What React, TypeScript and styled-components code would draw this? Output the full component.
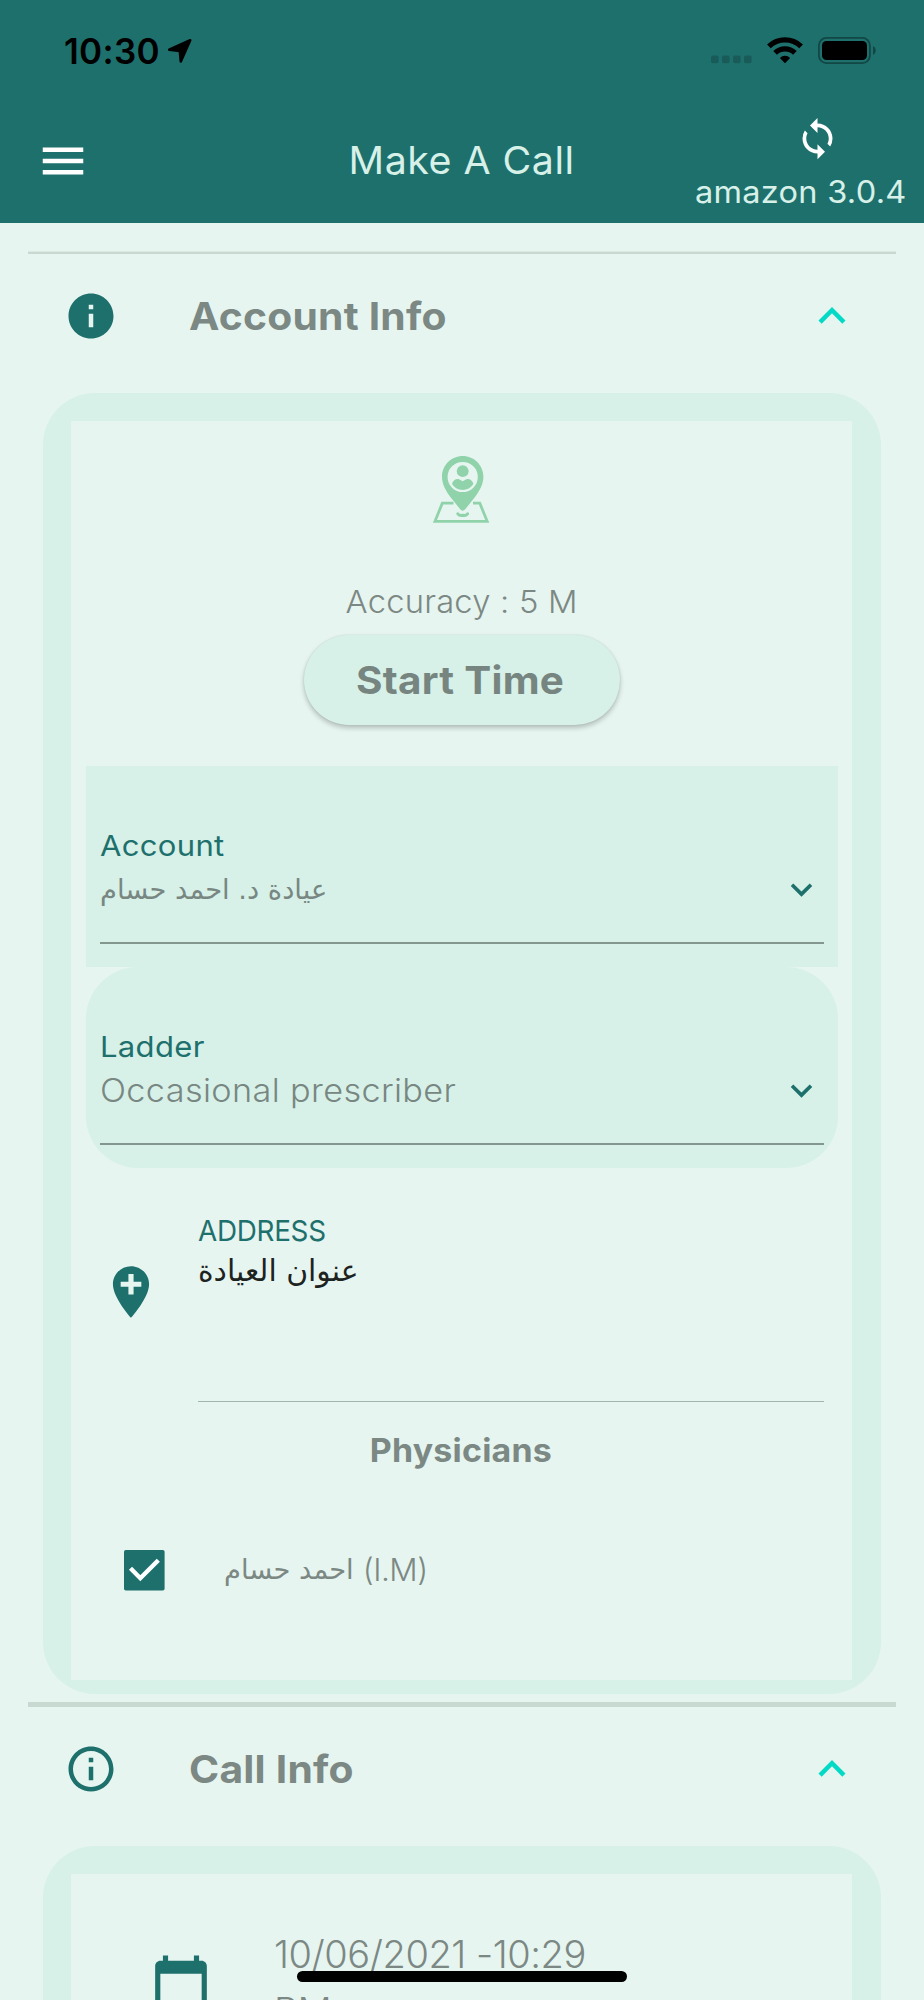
import React from "react";
import styled, { createGlobalStyle, css } from "styled-components";
import {
  MdAddLocation,
  MdCalendarToday,
  MdExpandLess,
  MdExpandMore,
  MdInfo,
  MdInfoOutline,
  MdMenu,
  MdSync,
} from "react-icons/md";

const teal = "#1e706d";
const mint = "#d7f1e8";
const page = "#e6f5f0";
const grey = "#7c8883";
const accent = "#03dac5";
const latin = `Inter, "Open Sans", sans-serif`;
const arabic = `"DejaVu Sans", "Noto Sans", sans-serif`;

const wide = (ratio: number, origin: "left" | "center" | "right") => css`
  transform: scaleX(${ratio});
  transform-origin: ${origin} center;
`;

const GlobalStyle = createGlobalStyle`
  *, *::before, *::after { box-sizing: border-box; }
  body { margin: 0; background: ${page}; font-family: ${latin}; }
  svg { display: block; flex: none; }
`;

const Screen = styled.div`
  position: relative;
  width: 924px;
  height: 2000px;
  overflow: hidden;
  background: ${page};
  color: ${grey};
`;

const Header = styled.header`
  height: 223px;
  background: ${teal};
  color: ${mint};
`;

const StatusBar = styled.div`
  display: flex;
  align-items: center;
  height: 101px;
  padding: 0 47px 0 64px;
  color: #000;
`;

const Clock = styled.span`
  width: 103px;
  font-size: 35px;
  font-weight: 600;
  letter-spacing: 0.3px;
  line-height: 40px;
  white-space: nowrap;
`;

const StatusIcons = styled.div`
  display: flex;
  gap: 15px;
  margin-left: auto;
`;

const Toolbar = styled.div`
  display: grid;
  grid-template-columns: 250px 1fr 250px;
  height: 122px;
`;

const MenuButton = styled.div`
  padding: 33px 0 0 36px;
  color: #fff;
`;

const ScreenTitle = styled.h1`
  justify-self: center;
  margin: 39px 0 0;
  font-size: 37.5px;
  font-weight: 400;
  line-height: 41px;
  letter-spacing: 0.45px;
  white-space: nowrap;
  ${wide(1.05, "center")}
`;

const SyncBlock = styled.div`
  display: flex;
  flex-direction: column;
  align-items: flex-end;
  padding: 15px 17px 0 0;
`;

const SyncIcon = styled.div`
  margin-right: 67px;
  color: #fff;
`;

const Version = styled.span`
  margin-top: 13px;
  font-size: 31px;
  line-height: 36px;
  letter-spacing: 0.25px;
  white-space: nowrap;
  ${wide(1.05, "right")}
`;

const Divider = styled.hr<{ $thick?: boolean }>`
  height: ${(p) => (p.$thick ? 5 : 3)}px;
  margin: ${(p) => (p.$thick ? "8px 28px 0" : "28px 28px 0")};
  border: 0;
  border-top: ${(p) => (p.$thick ? 0 : 1)}px solid #dae9e2;
  background: #c8d9d2;
`;

const SectionHeader = styled.div`
  display: flex;
  align-items: center;
  height: 139px;
  padding: 0 65px 15px 64px;
`;

const SectionTitle = styled.h2`
  flex: 1;
  margin: 0 0 0 71px;
  font-size: 38.5px;
  font-weight: 700;
  line-height: 46px;
  letter-spacing: 0.2px;

  span {
    display: inline-block;
    ${wide(1.06, "left")}
  }
`;

const Card = styled.section`
  margin: 0 43px;
  padding: 28px 29px 14px 28px;
  border-radius: 52px;
  background: ${mint};
`;

const CardBody = styled.div<{ $height: number }>`
  display: flex;
  flex-direction: column;
  height: ${(p) => p.$height}px;
  padding: 0 14px 0 15px;
  background: ${page};
`;

const MapMark = styled.div`
  display: flex;
  justify-content: center;
  padding-top: 35px;
`;

const Accuracy = styled.p`
  align-self: center;
  margin: 58px 0 0;
  font-size: 31.5px;
  font-weight: 300;
  line-height: 41px;
  letter-spacing: 0.2px;
  ${wide(1.04, "center")}
`;

const StartButton = styled.button`
  align-self: center;
  width: 316px;
  height: 90px;
  margin: 13px 0 41px;
  padding: 0 3px 0 0;
  border: 0;
  border-radius: 45px;
  background: ${mint};
  box-shadow: 0 3px 5px rgba(0, 0, 0, 0.22), 0 0 2px rgba(0, 0, 0, 0.1);
  color: #76857f;
  font-family: inherit;
  font-size: 38.5px;
  font-weight: 700;
  letter-spacing: 0.25px;

  span {
    display: inline-block;
    ${wide(1.05, "center")}
  }
`;

const Field = styled.div<{ $round?: boolean }>`
  flex: none;
  height: 201px;
  padding: 60px 14px 0;
  border-radius: ${(p) => (p.$round ? 52 : 0)}px;
  background: ${mint};
`;

const Label = styled.div<{ $narrow?: boolean }>`
  align-self: flex-start;
  width: max-content;
  color: ${teal};
  font-size: 29px;
  line-height: 40px;
  letter-spacing: ${(p) => (p.$narrow ? -0.3 : 0.3)}px;
  ${(p) => wide(p.$narrow ? 0.96 : 1.07, "left")}
`;

const ValueRow = styled.div`
  display: flex;
  align-items: center;
  justify-content: space-between;
  height: 78px;
  padding: 1px 1px 30px 0;
  border-bottom: 2px solid #84978f;
  color: ${teal};
`;

const Value = styled.span`
  color: #788782;
  font-size: 32px;
  font-weight: 300;
  line-height: 44px;
  letter-spacing: 0.35px;
  ${wide(1.07, "left")}
`;

const ArabicText = styled.span<{ $size?: number; $ink?: string }>`
  color: ${(p) => p.$ink ?? grey};
  font-family: ${arabic};
  font-size: ${(p) => p.$size ?? 27}px;
  line-height: 40px;
  white-space: nowrap;
`;

const AddressRow = styled.div`
  display: flex;
  flex: none;
  height: 234px;
  padding-right: 14px;
  color: ${teal};
`;

const PinSlot = styled.div`
  width: 112px;
  padding: 93px 0 0 14px;
`;

const AddressField = styled.div`
  display: flex;
  flex: 1;
  flex-direction: column;
  padding-top: 43px;
  border-bottom: 1px solid #a3b6ae;
`;

const GroupTitle = styled.h3`
  align-self: center;
  margin: 29px 0 69px;
  padding-right: 2px;
  font-size: 32px;
  font-weight: 700;
  line-height: 40px;
  letter-spacing: 0.2px;
  ${wide(1.06, "center")}
`;

const PhysicianRow = styled.div`
  display: flex;
  align-items: center;
  height: 60px;
  padding-left: 38px;
`;

const PhysicianName = styled.div`
  display: flex;
  align-items: center;
  gap: 9px;
  margin-left: 59px;
`;

const Specialty = styled.span`
  font-size: 31.5px;
  font-weight: 300;
  line-height: 40px;
  letter-spacing: -0.5px;
`;

const DateRow = styled.div`
  display: flex;
  padding: 52px 0 0 64px;
`;

const CalendarSlot = styled.div`
  padding-top: 27px;
  color: ${teal};
`;

const DateText = styled.div`
  width: 330px;
  margin-left: 62px;
  font-size: 38px;
  font-weight: 300;
  line-height: 57px;
  letter-spacing: -0.45px;
`;

const HomeIndicator = styled.div`
  position: absolute;
  top: 1971px;
  left: 297px;
  width: 330px;
  height: 11px;
  border-radius: 6px;
  background: #000;
`;

const LocationArrow = () => (
  <svg width="26" height="26" viewBox="0 0 26 26">
    <path d="M23.2 2.2 2.2 11.800 12.800 12.900 13.800 23.400Z" fill="#000" stroke="#000" strokeWidth="2.600" strokeLinejoin="round" />
  </svg>
);

const CellularDots = () => (
  <svg width="41" height="27" viewBox="0 0 41 27">
    {[0, 11, 22, 33].map((x) => (
      <rect key={x} x={x} y="18.6" width="7.6" height="7.6" rx="2" fill="#185b58" />
    ))}
  </svg>
);

const Wifi = () => (
  <svg width="36" height="27" viewBox="0 0 36 27">
    <path d="M1.9 9.3A23.3 23.3 0 0 1 34.1 9.3" fill="none" stroke="#000" strokeWidth="5.3" />
    <path d="M8.1 15.9A14.3 14.3 0 0 1 27.9 15.9" fill="none" stroke="#000" strokeWidth="5.3" />
    <path d="M12.9 20.9A7.3 7.3 0 0 1 23.1 20.9L18 26.2Z" fill="#000" />
  </svg>
);

const Battery = () => (
  <svg width="59" height="27" viewBox="0 0 59 27">
    <rect x="0.9" y="0.9" width="51" height="25.2" rx="7.6" fill="none" stroke="#124745" strokeWidth="1.8" />
    <rect x="4" y="4" width="45" height="19" rx="4.6" fill="#000" />
    <path d="M55 9a5 5 0 0 1 0 9Z" fill="#124745" />
  </svg>
);

const MapPerson = () => (
  <svg width="58" height="67" viewBox="0 0 58 67">
    <path d="M20.500 47.200H9.300L2 65.300H54.200L46.800 47.200H40" fill="none" stroke="#90d3ab" strokeWidth="2.800" />
    <path
      fill="#90d3ab"
      fillRule="evenodd"
      d="M29.700 0C18.200 0 9 9.300 9 20.700 9 28 12.800 34.500 17 40.500L27.200 53.300Q29.700 56 32.200 53.300L42.400 40.500C46.600 34.500 50.400 28 50.400 20.700 50.400 9.300 41.200 0 29.700 0ZM29.700 5.900a15.100 15.100 0 1 1 0 30.200a15.100 15.100 0 1 1 0-30.200Z"
    />
    <circle cx="29.700" cy="15.200" r="5.900" fill="#90d3ab" />
    <path d="M19 27.800C20.200 24 23.200 22.300 26 23.200L29.700 25.300 33.400 23.200C36.200 22.300 39.200 24 40.400 27.800 38 32 34 34 29.700 34S21.400 32 19 27.800Z" fill="#90d3ab" />
    <path d="M24.800 57.800Q26.500 60 29.700 59.300 32.900 60 34.600 57.800" fill="none" stroke="#90d3ab" strokeWidth="3" strokeLinecap="round" />
  </svg>
);

const CheckedBox = () => (
  <svg width="41" height="41" viewBox="0 0 41 41">
    <rect width="40.600" height="40.600" rx="1.800" fill={teal} />
    <path d="M6.500 18.300 16.300 28.200 34.300 10.200" fill="none" stroke="#fff" strokeWidth="4.400" />
  </svg>
);

export default function App() {
  return (
    <Screen>
      <GlobalStyle />
      <Header>
        <StatusBar>
          <Clock>10:30</Clock>
          <LocationArrow />
          <StatusIcons>
            <CellularDots />
            <Wifi />
            <Battery />
          </StatusIcons>
        </StatusBar>
        <Toolbar>
          <MenuButton>
            <MdMenu size={54} />
          </MenuButton>
          <ScreenTitle>Make A Call</ScreenTitle>
          <SyncBlock>
            <SyncIcon>
              <MdSync size={45} />
            </SyncIcon>
            <Version>amazon 3.0.4</Version>
          </SyncBlock>
        </Toolbar>
      </Header>

      <Divider />
      <SectionHeader>
        <MdInfo size={54} color={teal} />
        <SectionTitle>
          <span>Account Info</span>
        </SectionTitle>
        <MdExpandLess size={54} color={accent} />
      </SectionHeader>
      <Card>
        <CardBody $height={1259}>
          <MapMark>
            <MapPerson />
          </MapMark>
          <Accuracy>Accuracy : 5 M</Accuracy>
          <StartButton>
            <span>Start Time</span>
          </StartButton>
          <Field>
            <Label>Account</Label>
            <ValueRow>
              <ArabicText $size={27.300} $ink="#788782">عيادة د. احمد حسام</ArabicText>
              <MdExpandMore size={43} />
            </ValueRow>
          </Field>
          <Field $round>
            <Label>Ladder</Label>
            <ValueRow>
              <Value>Occasional prescriber</Value>
              <MdExpandMore size={43} />
            </ValueRow>
          </Field>
          <AddressRow>
            <PinSlot>
              <MdAddLocation size={62} />
            </PinSlot>
            <AddressField>
              <Label $narrow>ADDRESS</Label>
              <ArabicText $size={29.800} $ink="#1d2321">عنوان العيادة</ArabicText>
            </AddressField>
          </AddressRow>
          <GroupTitle>Physicians</GroupTitle>
          <PhysicianRow>
            <CheckedBox />
            <PhysicianName>
              <ArabicText $size={27.300}>احمد حسام</ArabicText>
              <Specialty>(I.M)</Specialty>
            </PhysicianName>
          </PhysicianRow>
        </CardBody>
      </Card>

      <Divider $thick />
      <SectionHeader>
        <MdInfoOutline size={54} color={teal} />
        <SectionTitle>
          <span>Call Info</span>
        </SectionTitle>
        <MdExpandLess size={54} color={accent} />
      </SectionHeader>
      <Card>
        <CardBody $height={400}>
          <DateRow>
            <CalendarSlot>
              <MdCalendarToday size={62} />
            </CalendarSlot>
            <DateText>10/06/2021 -10:29 PM</DateText>
          </DateRow>
        </CardBody>
      </Card>
      <HomeIndicator />
    </Screen>
  );
}
